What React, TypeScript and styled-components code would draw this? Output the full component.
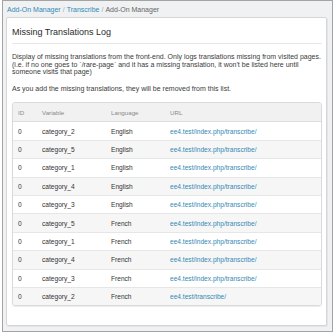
import React from 'react';
import styled, { createGlobalStyle } from 'styled-components';

interface LogRow {
  id: number;
  variable: string;
  language: string;
  url: string;
}

const rows: LogRow[] = [
  { id: 0, variable: 'category_2', language: 'English', url: 'ee4.test/index.php/transcribe/' },
  { id: 0, variable: 'category_5', language: 'English', url: 'ee4.test/index.php/transcribe/' },
  { id: 0, variable: 'category_1', language: 'English', url: 'ee4.test/index.php/transcribe/' },
  { id: 0, variable: 'category_4', language: 'English', url: 'ee4.test/index.php/transcribe/' },
  { id: 0, variable: 'category_3', language: 'English', url: 'ee4.test/index.php/transcribe/' },
  { id: 0, variable: 'category_5', language: 'French', url: 'ee4.test/index.php/transcribe/' },
  { id: 0, variable: 'category_1', language: 'French', url: 'ee4.test/index.php/transcribe/' },
  { id: 0, variable: 'category_4', language: 'French', url: 'ee4.test/index.php/transcribe/' },
  { id: 0, variable: 'category_3', language: 'French', url: 'ee4.test/index.php/transcribe/' },
  { id: 0, variable: 'category_2', language: 'French', url: 'ee4.test/transcribe/' },
];

const App: React.FC = () => {
  return (
    <>
      <GlobalStyle />
      <Frame>
        <Breadcrumb>
          <Crumb href="#">Add-On Manager</Crumb>
          <Sep>/</Sep>
          <Crumb href="#">Transcribe</Crumb>
          <Sep>/</Sep>
          <Current>Add-On Manager</Current>
        </Breadcrumb>
        <Panel>
          <Title>Missing Translations Log</Title>
          <Text>
            Display of missing translations from the front-end. Only logs translations missing from visited pages.
            (i.e. if no one goes to `/rare-page` and it has a missing translation, it won't be listed here until
            someone visits that page)
          </Text>
          <Text>As you add the missing translations, they will be removed from this list.</Text>
          <Table>
            <HeadRow>
              <HeadCell>ID</HeadCell>
              <HeadCell>Variable</HeadCell>
              <HeadCell>Language</HeadCell>
              <HeadCell>URL</HeadCell>
            </HeadRow>
            {rows.map((row, i) => (
              <Row key={i} $striped={i % 2 === 1} $last={i === rows.length - 1}>
                <Cell>{row.id}</Cell>
                <Cell>{row.variable}</Cell>
                <Cell>{row.language}</Cell>
                <Cell>
                  <UrlLink href="#">{row.url}</UrlLink>
                </Cell>
              </Row>
            ))}
          </Table>
        </Panel>
      </Frame>
    </>
  );
};

const GlobalStyle = createGlobalStyle`
  html, body {
    margin: 0;
    padding: 0;
    background: #fff;
    font-family: "Liberation Sans", Arial, sans-serif;
  }
`;

const Frame = styled.div`
  box-sizing: border-box;
  margin-left: 2px;
  width: 331px;
  height: 332px;
  border: 1px solid #a4a4a4;
  background: #eff1f3;
`;

const Breadcrumb = styled.div`
  display: flex;
  align-items: center;
  gap: 2px;
  padding: 4px 0 0 4px;
  height: 10px;
  margin-bottom: 2px;
  font-size: 7px;
  line-height: 10px;
`;

const Crumb = styled.a`
  color: #3489b4;
  text-decoration: none;
`;

const Sep = styled.span`
  color: #a8a8a8;
`;

const Current = styled.span`
  color: #666;
`;

const Panel = styled.div`
  box-sizing: border-box;
  margin-left: 3px;
  width: 321px;
  height: 309px;
  padding: 0 4px 0 5px;
  background: #fff;
  border: 1px solid #d6d6d6;
  border-radius: 2px;
  box-shadow: 1px 1px 0 #e2e4e6;
`;

const Title = styled.h1`
  margin: 0;
  padding: 8px 0 5px;
  font-size: 9px;
  line-height: 12px;
  font-weight: normal;
  color: #2a2a2a;
  border-bottom: 1px solid #e8e8e8;
`;

const Text = styled.p`
  margin: 9px 0 0;
  font-size: 7px;
  line-height: 7.5px;
  color: #3a3a3a;
  & + & {
    margin-top: 9px;
  }
`;

const Table = styled.div`
  margin-top: 10px;
  border: 1px solid #dadada;
  border-radius: 3px;
  overflow: hidden;
  box-shadow: 0 1px 1px rgba(0, 0, 0, 0.08);
`;

const HeadRow = styled.div`
  display: grid;
  grid-template-columns: 24px 69px 59px 1fr;
  align-items: center;
  height: 18.4px;
  background: #f1f1f1;
  border-bottom: 1px solid #dcdcdc;
`;

const HeadCell = styled.div`
  padding-left: 5px;
  font-size: 6.2px;
  color: #8a8a8a;
`;

const Row = styled.div<{ $striped: boolean; $last: boolean }>`
  display: grid;
  grid-template-columns: 24px 69px 59px 1fr;
  align-items: center;
  height: 17.4px;
  background: ${(p) => (p.$striped ? '#f6f6f6' : '#fff')};
  border-bottom: ${(p) => (p.$last ? 'none' : '1px solid #e6e6e6')};
`;

const Cell = styled.div`
  padding-left: 5px;
  font-size: 6.6px;
  color: #333;
  white-space: nowrap;
`;

const UrlLink = styled.a`
  color: #3489b4;
  text-decoration: none;
`;

export default App;
